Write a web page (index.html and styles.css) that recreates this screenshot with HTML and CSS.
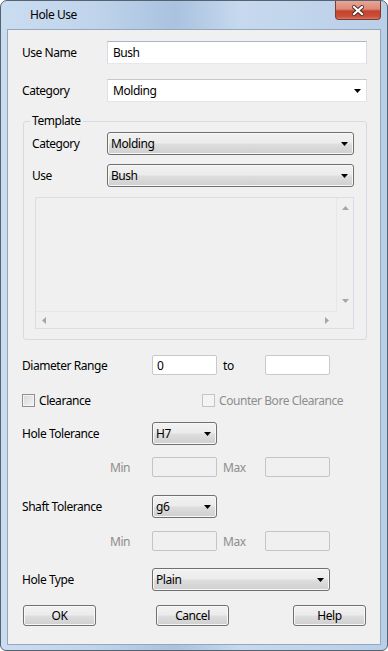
FILE: index.html
```html
<!DOCTYPE html>
<html lang="en">

<head>
  <meta charset="UTF-8">
  <title>Hole Use</title>
  <link rel="stylesheet" href="styles.css">
</head>

<body>
  <div class="window">
    <!-- title bar -->
    <div class="titlebar">
      <span class="title">Hole Use</span>
      <div class="close-btn">
        <svg width="12" height="11" viewBox="0 0 12 11">
          <path d="M2 2 L10 9 M10 2 L2 9" stroke="#4b2b24" stroke-width="4" stroke-linecap="square" />
          <path d="M2 2 L10 9 M10 2 L2 9" stroke="#ffffff" stroke-width="2.2" stroke-linecap="square" />
        </svg>
      </div>
    </div>

    <div class="client">
      <div class="row h23">
        <span class="label label-top">Use Name</span>
        <input class="textbox w260" type="text" value="Bush">
      </div>

      <div class="row h23 mt15">
        <span class="label label-top">Category</span>
        <div class="combo w260">
          <span>Molding</span>
          <svg class="arrow" width="7" height="4"><polygon points="0,0 7,0 3.5,4" fill="#000" /></svg>
        </div>
      </div>

      <!-- template group -->
      <fieldset class="group">
        <legend class="legend">Template</legend>
        <div class="row h23 mt3 in-group">
          <span class="label label-group">Category</span>
          <div class="dropdown w247">
            <span>Molding</span>
            <svg class="arrow" width="7" height="4"><polygon points="0,0 7,0 3.5,4" fill="#000" /></svg>
          </div>
        </div>
        <div class="row h23 mt9 in-group">
          <span class="label label-group">Use</span>
          <div class="dropdown w247">
            <span>Bush</span>
            <svg class="arrow" width="7" height="4"><polygon points="0,0 7,0 3.5,4" fill="#000" /></svg>
          </div>
        </div>
        <div class="list">
          <div class="list-area"></div>
          <div class="vscroll">
            <svg width="7" height="4"><polygon points="3.5,0 7,4 0,4" fill="#a6a6a6" /></svg>
            <svg width="7" height="4"><polygon points="0,0 7,0 3.5,4" fill="#a6a6a6" /></svg>
          </div>
          <div class="hscroll">
            <svg width="4" height="7"><polygon points="4,0 4,7 0,3.5" fill="#a6a6a6" /></svg>
            <svg width="4" height="7"><polygon points="0,0 4,3.5 0,7" fill="#a6a6a6" /></svg>
          </div>
          <div class="corner"></div>
        </div>
      </fieldset>

      <div class="row h20 mt15">
        <span class="label label-bottom">Diameter Range</span>
        <input class="textbox small" type="text" value="0">
        <span class="mid-label">to</span>
        <input class="textbox small" type="text" value="">
      </div>

      <div class="row h13 mt19">
        <div class="check-item first">
          <span class="check"></span>
          <span>Clearance</span>
        </div>
        <div class="check-item disabled">
          <span class="check"></span>
          <span>Counter Bore Clearance</span>
        </div>
      </div>

      <div class="row h23 mt15">
        <span class="label label-bottom">Hole Tolerance</span>
        <div class="dropdown w65">
          <span>H7</span>
          <svg class="arrow" width="7" height="4"><polygon points="0,0 7,0 3.5,4" fill="#000" /></svg>
        </div>
      </div>

      <div class="row h20 mt12">
        <span class="label label-bottom minmax">Min</span>
        <input class="textbox small off" type="text" disabled>
        <span class="mid-label grey">Max</span>
        <input class="textbox small off" type="text" disabled>
      </div>

      <div class="row h23 mt18">
        <span class="label label-bottom">Shaft Tolerance</span>
        <div class="dropdown w65">
          <span>g6</span>
          <svg class="arrow" width="7" height="4"><polygon points="0,0 7,0 3.5,4" fill="#000" /></svg>
        </div>
      </div>

      <div class="row h20 mt13">
        <span class="label label-bottom minmax">Min</span>
        <input class="textbox small off" type="text" disabled>
        <span class="mid-label grey">Max</span>
        <input class="textbox small off" type="text" disabled>
      </div>

      <div class="row h23 mt17">
        <span class="label label-bottom">Hole Type</span>
        <div class="dropdown w178">
          <span>Plain</span>
          <svg class="arrow" width="7" height="4"><polygon points="0,0 7,0 3.5,4" fill="#000" /></svg>
        </div>
      </div>

      <div class="row h21 mt14 buttons">
        <button class="btn btn-ok">OK</button>
        <button class="btn btn-cancel">Cancel</button>
        <button class="btn btn-help">Help</button>
      </div>
    </div>
  </div>
</body>

</html>
```

FILE: styles.css
```css
body {
  margin: 0;
  padding: 0;
  background-color: #fff;
  font-family: "Noto Sans", "DejaVu Sans", sans-serif;
  font-size: 12px;
  letter-spacing: -0.45px;
  color: #000;
}

/* window frame */
.window {
  box-sizing: border-box;
  width: 388px;
  height: 651px;
  border: 1px solid #55626f;
  border-radius: 7px 7px 6px 6px;
  padding: 0 6px 5px 6px;
  display: flex;
  flex-direction: column;
  background: linear-gradient(90deg, #cadcf0 0%, #bfd4eb 25%, #a9c2df 45%, #c6d9ee 62%, #b9cfe8 100%);
}

.titlebar {
  height: 28px;
  display: flex;
  flex-shrink: 0;
}

.title {
  padding: 6px 0 0 23px;
  line-height: 16px;
}

.close-btn {
  box-sizing: border-box;
  margin-left: auto;
  width: 46px;
  height: 19px;
  border: 1px solid #7d3a2e;
  border-top: none;
  border-radius: 0 0 4px 4px;
  background: linear-gradient(#e8a595 0%, #dc8a77 45%, #c5432e 55%, #c84d37 85%, #d8795f 100%);
  display: flex;
  justify-content: center;
  align-items: center;
}

.client {
  flex: 1;
  border: 1px solid #97a7bb;
  background-color: #f0f0f0;
  padding: 11px 13px 0 14px;
  display: flex;
  flex-direction: column;
}

/* rows */
.row {
  display: flex;
  align-items: center;
  flex-shrink: 0;
}

.h13 { height: 13px; }
.h20 { height: 20px; }
.h21 { height: 21px; }
.h23 { height: 23px; }

.mt3 { margin-top: 3px; }
.mt9 { margin-top: 9px; }
.mt12 { margin-top: 12px; }
.mt13 { margin-top: 13px; }
.mt14 { margin-top: 14px; }
.mt15 { margin-top: 15px; }
.mt17 { margin-top: 17px; }
.mt18 { margin-top: 18px; }
.mt19 { margin-top: 19px; }

.label {
  flex-shrink: 0;
}

.label-top {
  width: 85px;
}

.label-group {
  width: 75px;
}

.label-bottom {
  width: 130px;
}

.minmax {
  box-sizing: border-box;
  text-align: right;
  padding-right: 22px;
  color: #8d8d8d;
}

.mid-label {
  width: 42px;
  margin-left: 6px;
}

.grey {
  color: #8d8d8d;
}

/* controls */
.textbox {
  box-sizing: border-box;
  height: 100%;
  margin: 0;
  border: 1px solid;
  border-color: #abb6c4 #d5dce5 #e3e9ef #d5dce5;
  background-color: #fff;
  padding: 0 5px;
  font: inherit;
  letter-spacing: inherit;
  color: #000;
  outline: none;
}

.w260 { width: 260px; }
.w247 { width: 247px; }
.w178 { width: 178px; }
.w65 { width: 65px; }

.small {
  width: 65px;
  padding: 0 4px;
  border-color: #c9c9c9;
  border-radius: 2px;
}

.small.off {
  background-color: #f0f0f0;
  border-color: #c4c4c4;
}

.combo {
  box-sizing: border-box;
  height: 100%;
  border: 1px solid;
  border-color: #c4c9d0 #dde1e6 #e3e7eb #dde1e6;
  background-color: #fff;
  padding: 0 5px;
  display: flex;
  justify-content: space-between;
  align-items: center;
}

.dropdown {
  box-sizing: border-box;
  height: 100%;
  border: 1px solid #707070;
  border-radius: 3px;
  background: linear-gradient(#f2f2f2 0%, #ebebeb 48%, #dedede 52%, #cfcfcf 100%);
  box-shadow: inset 0 0 0 1px #f8f8f8;
  padding: 0 5px 0 3px;
  display: flex;
  justify-content: space-between;
  align-items: center;
}

.arrow {
  flex-shrink: 0;
}

/* template group box */
.group {
  margin: 11px 0 0 1px;
  width: 344px;
  min-width: 0;
  box-sizing: border-box;
  border: 1px solid #d3dbe3;
  border-radius: 3px;
  padding: 0 12px 10px 6px;
  flex-shrink: 0;
}

.legend {
  padding: 0 2px;
  line-height: 16px;
}

.in-group {
  margin-left: 2px;
}

.list {
  box-sizing: border-box;
  margin: 10px 0 0 5px;
  width: 319px;
  height: 132px;
  border: 1px solid #dadee3;
  display: grid;
  grid-template-columns: 1fr 17px;
  grid-template-rows: 1fr 17px;
}

.vscroll {
  border-left: 1px solid #e7e7e7;
  display: flex;
  flex-direction: column;
  justify-content: space-between;
  align-items: center;
  padding: 8px 0 8px 0;
}

.hscroll {
  border-top: 1px solid #e7e7e7;
  display: flex;
  justify-content: space-between;
  align-items: center;
  padding: 0 7px 0 6px;
}

.corner {
  background-color: #f0f0f0;
}

/* check boxes */
.check-item {
  display: flex;
  align-items: center;
  gap: 4px;
}

.check-item.first {
  width: 180px;
}

.check {
  box-sizing: border-box;
  width: 13px;
  height: 13px;
  border: 1px solid #8e8f8f;
  background: linear-gradient(135deg, #d4d6d9 0%, #f5f5f5 100%);
  box-shadow: inset 0 0 0 1px #f4f4f4;
}

.check-item.disabled {
  color: #8d8d8d;
}

.check-item.disabled .check {
  border-color: #c4c4c4;
  background: #f4f4f4;
}

/* bottom buttons */
.btn {
  box-sizing: border-box;
  width: 73px;
  height: 100%;
  margin: 0;
  border: 1px solid #707070;
  border-radius: 3px;
  background: linear-gradient(#f2f2f2 0%, #ebebeb 48%, #dedede 52%, #cfcfcf 100%);
  box-shadow: inset 0 0 0 1px #f8f8f8;
  padding: 0;
  font: inherit;
  letter-spacing: inherit;
  color: #000;
}

.btn-ok {
  margin-left: 1px;
}

.btn-cancel {
  margin-left: 60px;
}

.btn-help {
  margin-left: 64px;
}
```
